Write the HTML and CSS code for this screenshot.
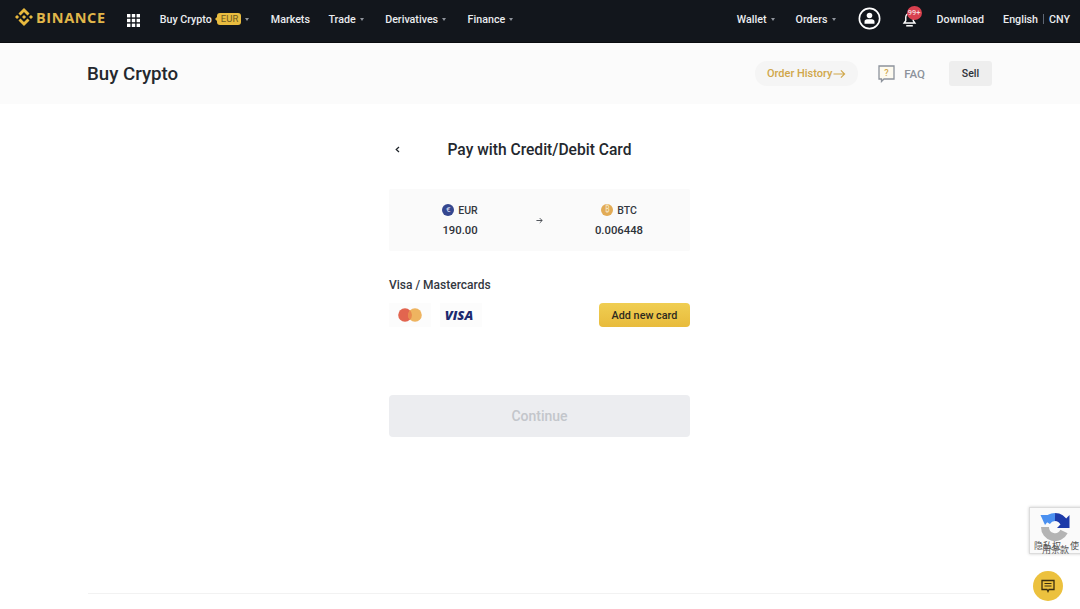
FILE: index.html
```html
<!DOCTYPE html>
<html lang="en">
<head>
<meta charset="utf-8">
<title>Buy Crypto</title>
<link rel="stylesheet" href="styles.css">
</head>
<body>
<header class="topbar">
  <div class="logo">
    <svg class="logo-mark" viewBox="0 0 126.610 126.610" width="18" height="18"><g fill="#e8b93e"><polygon points="38.730 53.200 63.310 28.620 87.900 53.210 102.200 38.910 63.310 0 24.430 38.900"/><polygon points="0 63.310 14.300 49 28.600 63.310 14.300 77.610"/><polygon points="38.730 73.410 63.310 98 87.900 73.410 102.200 87.700 63.310 126.610 24.410 87.700"/><polygon points="98 63.310 112.300 49 126.610 63.310 112.300 77.610"/><polygon points="77.830 63.300 63.310 48.780 48.800 63.280 63.310 77.800"/></g></svg>
    <span class="logo-text">BINANCE</span>
  </div>
  <svg class="grid-icon" viewBox="0 0 13 13" width="13" height="13"><g fill="#fff"><rect x="0" y="0" width="3.400" height="3.400"/><rect x="4.800" y="0" width="3.400" height="3.400"/><rect x="9.600" y="0" width="3.400" height="3.400"/><rect x="0" y="4.800" width="3.400" height="3.400"/><rect x="4.800" y="4.800" width="3.400" height="3.400"/><rect x="9.600" y="4.800" width="3.400" height="3.400"/><rect x="0" y="9.600" width="3.400" height="3.400"/><rect x="4.800" y="9.600" width="3.400" height="3.400"/><rect x="9.600" y="9.600" width="3.400" height="3.400"/></g></svg>
  <nav class="nav nav-left">
    <a class="nav-item">Buy Crypto<span class="tag">EUR</span><i class="caret"></i></a>
    <a class="nav-item">Markets</a>
    <a class="nav-item">Trade<i class="caret"></i></a>
    <a class="nav-item">Derivatives<i class="caret"></i></a>
    <a class="nav-item">Finance<i class="caret"></i></a>
  </nav>
  <nav class="nav nav-right">
    <a class="nav-item">Wallet<i class="caret"></i></a>
    <a class="nav-item">Orders<i class="caret"></i></a>
    <svg class="user-icon" viewBox="0 0 24 24" width="23" height="23"><circle cx="12" cy="12" r="10.600" fill="none" stroke="#fff" stroke-width="1.700"/><circle cx="12" cy="8.800" r="2.900" fill="#fff"/><path d="M6.800 17.400v-2.200c0-1.400 1.200-2.400 2.600-2.400h5.200c1.400 0 2.600 1 2.600 2.400v2.200z" fill="#fff"/></svg>
    <span class="bell">
      <svg viewBox="0 0 16 18" width="15" height="17"><path d="M8 2.500c-2.600 0-4 2-4 4.300v3.500l-1.800 2.500h11.600L12 10.300V6.800c0-2.300-1.400-4.300-4-4.300z" fill="none" stroke="#fff" stroke-width="1.500"/><path d="M4.500 15.700h7" stroke="#fff" stroke-width="1.600"/></svg>
      <span class="badge">99+</span>
    </span>
    <a class="nav-item">Download</a>
    <span class="lang"><a class="nav-item">English</a><i class="sep"></i><a class="nav-item">CNY</a></span>
  </nav>
</header>

<section class="subbar">
  <h1 class="subbar-title">Buy Crypto</h1>
  <div class="subbar-actions">
    <a class="history">Order History<svg viewBox="0 0 14 10" width="13" height="10"><path d="M0.500 5h12M8.500 1l4 4-4 4" fill="none" stroke="#d0a74a" stroke-width="1.200"/></svg></a>
    <a class="faq">
      <svg viewBox="0 0 17 18" width="17" height="18"><path d="M1 1h15v13H6l-2.500 2.500V14H1z" fill="#fdfaef" stroke="#8d939c" stroke-width="1.300"/><text x="8.500" y="11" class="faq-mark">?</text></svg>
      FAQ
    </a>
    <a class="sell">Sell</a>
  </div>
</section>

<main class="content">
  <div class="panel">
    <div class="panel-head">
      <svg class="back" viewBox="0 0 6 8" width="5" height="7"><path d="M4.800 1L1.500 4l3.300 3" fill="none" stroke="#1e2329" stroke-width="1.500"/></svg>
      <h2 class="panel-title">Pay with Credit/Debit Card</h2>
    </div>
    <div class="quote">
      <div class="quote-side">
        <div class="coin"><span class="coin-dot coin-eur">€</span>EUR</div>
        <div class="amount">190.00</div>
      </div>
      <svg class="quote-arrow" viewBox="0 0 8 8" width="7" height="7"><path d="M0.500 4h6.500M4.300 1.300L7 4 4.300 6.700" fill="none" stroke="#3a3f46" stroke-width="1"/></svg>
      <div class="quote-side">
        <div class="coin"><span class="coin-dot coin-btc">₿</span>BTC</div>
        <div class="amount">0.006448</div>
      </div>
    </div>
    <div class="section-label">Visa / Mastercards</div>
    <div class="cards">
      <span class="card-logo">
        <svg viewBox="0 0 24 14" width="24" height="14"><circle cx="7" cy="7" r="6.800" fill="#e2654f"/><circle cx="17" cy="7" r="6.800" fill="#eeb460"/><path d="M12 2.200a6.800 6.800 0 0 1 0 9.600 6.800 6.800 0 0 1 0-9.600z" fill="#e98a4e"/></svg>
      </span>
      <span class="card-logo visa">VISA</span>
      <a class="add-card">Add new card</a>
    </div>
    <button class="continue" type="button">Continue</button>
  </div>
</main>

<footer class="footer-line"></footer>

<aside class="recaptcha">
  <svg viewBox="0 0 30 30" width="30" height="30"><path d="M15 5A10 10 0 0 0 6.500 9.800" fill="none" stroke="#4a90f0" stroke-width="8"/><path d="M0.500 3L13 3 5 13z" fill="#4a90f0"/><path d="M15 5A10 10 0 0 1 24 11" fill="none" stroke="#1c3aa9" stroke-width="8"/><path d="M29.500 3V16H17z" fill="#1c3aa9"/><path d="M5 15A10 10 0 0 0 24 19.500" fill="none" stroke="#b4b4b4" stroke-width="8"/></svg>
  <span class="recaptcha-a">隐私权</span><span class="recaptcha-b">使</span><span class="recaptcha-c">用条款</span>
</aside>

<button class="chat" type="button" aria-label="Chat">
  <svg viewBox="0 0 14 14" width="14" height="14"><path d="M1 1.500h12v9H8l-1 2-1-2H1z" fill="none" stroke="#3a2f10" stroke-width="1.300"/><path d="M3.500 4.500h7M3.500 7h7" stroke="#3a2f10" stroke-width="1.200"/></svg>
</button>
</body>
</html>
```

FILE: styles.css
```css
* { box-sizing: border-box; }
html, body { height: 100%; }
body {
  margin: 0;
  height: 609px;
  overflow: hidden;
  position: relative;
  background: #fff;
  color: #1e2329;
  font-family: Roboto, "Noto Sans", "Liberation Sans", sans-serif;
  display: flex;
  flex-direction: column;
}
.topbar {
  height: 43px;
  flex: none;
  background: #12161c;
  border-bottom: 1px solid #0a0c10;
  display: flex;
  align-items: center;
  padding: 0 10px 0 15px;
  color: #eaecef;
  font-size: 10.700px;
  font-weight: 500;
}
.logo { display: flex; align-items: center; gap: 3px; margin-top: -8px; }
.logo-text {
  font-size: 14.500px;
  font-weight: 700;
  letter-spacing: 0.600px;
  color: #e0b64a;
  font-family: "Open Sans", Roboto, sans-serif;
}
.grid-icon { margin-left: 21px; margin-top: -1px; }
.nav { display: flex; align-items: center; }
.nav-left { margin-left: 20px; gap: 18.500px; }
.nav-right { margin-left: auto; gap: 18px; }
.nav-item { display: flex; align-items: center; white-space: nowrap; margin-top: -5px; padding-top: 1px; }
.tag {
  margin-left: 5px;
  background: #e9bc3f;
  color: #6d5a22;
  font-size: 9.500px;
  font-weight: 400;
  line-height: 12px;
  padding: 0 3px 0 4px;
  border-radius: 3px;
  position: relative;
}
.tag::before {
  content: "";
  position: absolute;
  left: -2px;
  top: 4px;
  border-top: 2px solid transparent;
  border-bottom: 2px solid transparent;
  border-right: 2px solid #e9bc3f;
}
.caret {
  display: inline-block;
  width: 0;
  height: 0;
  margin-left: 4px;
  margin-right: 3px;
  border-left: 2.500px solid transparent;
  border-right: 2.500px solid transparent;
  border-top: 3px solid #8f949b;
}
.user-icon { margin-top: -5px; margin-left: 1px; }
.bell { position: relative; display: flex; margin-top: -3px; margin-left: 3px; margin-right: 2px; }
.badge {
  position: absolute;
  top: -5px;
  left: 5px;
  width: 15px;
  height: 14px;
  border-radius: 50%;
  background: #d8404f;
  color: #f3d9dc;
  font-size: 7.500px;
  line-height: 14px;
  text-align: center;
}
.lang { display: flex; align-items: center; gap: 5px; margin-left: 1px; }
.sep { display: block; width: 1px; height: 10px; background: #5e6673; margin-top: -5px; }

.subbar {
  height: 61px;
  flex: none;
  background: #fbfbfb;
  display: flex;
  align-items: center;
  justify-content: space-between;
  padding: 0 88px 0 87px;
}
.subbar-title { margin: 0; font-size: 18.700px; font-weight: 500; color: #24282e; }
.subbar-actions { display: flex; align-items: center; }
.history {
  display: flex;
  align-items: center;
  gap: 1px;
  width: 103px;
  height: 25px;
  justify-content: center;
  border-radius: 12px;
  background: #f5f5f5;
  color: #d0a74a;
  font-size: 11px;
  font-weight: 500;
}
.faq {
  display: flex;
  align-items: center;
  gap: 9px;
  margin-left: 20px;
  font-size: 11.500px;
  font-weight: 500;
  color: #8d939c;
}
.faq-mark { font-size: 9px; fill: #d0a74a; text-anchor: middle; font-family: Roboto, sans-serif; }
.sell {
  margin-left: 24px;
  width: 43px;
  height: 25px;
  background: #eeeeee;
  border-radius: 3px;
  font-size: 10.500px;
  font-weight: 500;
  color: #2d3138;
  display: flex;
  align-items: center;
  justify-content: center;
}

.content { flex: 1; display: flex; justify-content: center; }
.panel { width: 301px; margin-left: -1px; }
.panel-head { height: 28px; margin-top: 32px; display: flex; align-items: center; position: relative; justify-content: center; }
.back { position: absolute; left: 6px; top: 10px; }
.panel-title { margin: 0; font-size: 15.600px; font-weight: 500; color: #24282e; }
.quote {
  margin-top: 25px;
  height: 62px;
  background: #fafafa;
  display: flex;
  align-items: center;
  justify-content: space-between;
  padding: 0 23px;
  border-radius: 2px;
}
.quote-side { width: 96px; display: flex; flex-direction: column; align-items: center; gap: 7px; padding-top: 1px; }
.coin { display: flex; align-items: center; gap: 4px; font-size: 10.500px; font-weight: 500; color: #33383f; line-height: 13px; }
.coin-dot {
  width: 12px;
  height: 12px;
  border-radius: 50%;
  font-size: 8px;
  line-height: 12px;
  text-align: center;
  color: #cdd3ea;
}
.coin-eur { background: #35478f; }
.coin-btc { background: #e2ab55; color: #f5e2bb; }
.amount { font-size: 11.300px; font-weight: 500; color: #2d3138; line-height: 14px; }
.section-label { margin-top: 26px; font-size: 12px; font-weight: 500; color: #33383f; line-height: 16px; }
.cards { margin-top: 10px; display: flex; align-items: center; gap: 9px; }
.card-logo { width: 42px; height: 24px; background: #fcfcfc; display: flex; align-items: center; justify-content: center; }
.visa { font-size: 13px; font-weight: 800; font-style: italic; color: #1d2a70; font-family: "Open Sans", sans-serif; padding: 0 4px 1px 0; }
.add-card {
  margin-left: auto;
  width: 91px;
  height: 24px;
  border-radius: 4px;
  background: linear-gradient(#f0ce52, #e8bb3c);
  font-size: 10.800px;
  font-weight: 500;
  color: #2d2a1e;
  display: flex;
  align-items: center;
  justify-content: center;
}
.continue {
  display: block;
  width: 100%;
  height: 42px;
  margin-top: 68px;
  border: 0;
  border-radius: 4px;
  background: #ecedf0;
  color: #c3c6cb;
  font-family: inherit;
  font-size: 14px;
  font-weight: 500;
}
.footer-line { height: 1px; flex: none; margin: 0 90px 15px 88px; background: #f2f2f2; }

.recaptcha {
  position: absolute;
  left: 1029px;
  top: 507px;
  width: 60px;
  height: 47px;
  background: #fafafa;
  border: 1px solid #dcdcdc;
  box-shadow: 0 0 3px rgba(0,0,0,.2);
  padding: 4px 0 0 10px;
}
.recaptcha-a, .recaptcha-b, .recaptcha-c {
  position: absolute;
  font-family: "Noto Sans CJK SC", sans-serif;
  font-size: 9px;
  line-height: 10px;
  color: #555;
  white-space: nowrap;
}
.recaptcha-a { left: 4px; top: 33px; }
.recaptcha-b { left: 40px; top: 33px; }
.recaptcha-c { left: 12px; top: 37px; }
.chat {
  position: absolute;
  left: 1033px;
  top: 571px;
  width: 30px;
  height: 30px;
  border: 0;
  padding: 0;
  border-radius: 50%;
  background: #ecc13e;
  display: flex;
  align-items: center;
  justify-content: center;
}
```
